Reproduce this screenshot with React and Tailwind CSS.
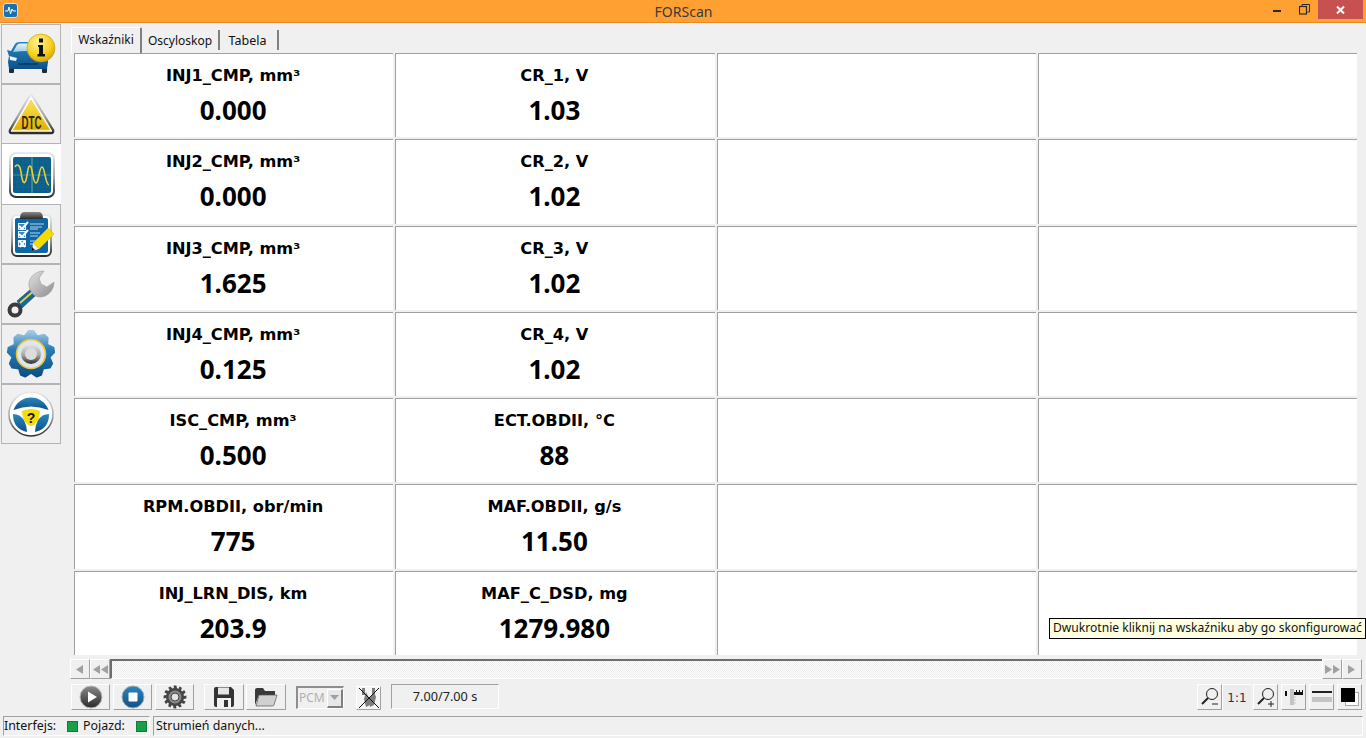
import React from "react";

const rows = [
  ["INJ1_CMP, mm³", "0.000", "CR_1, V", "1.03"],
  ["INJ2_CMP, mm³", "0.000", "CR_2, V", "1.02"],
  ["INJ3_CMP, mm³", "1.625", "CR_3, V", "1.02"],
  ["INJ4_CMP, mm³", "0.125", "CR_4, V", "1.02"],
  ["ISC_CMP, mm³", "0.500", "ECT.OBDII, °C", "88"],
  ["RPM.OBDII, obr/min", "775", "MAF.OBDII, g/s", "11.50"],
  ["INJ_LRN_DIS, km", "203.9", "MAF_C_DSD, mg", "1279.980"],
];

function gearPoints(cx, cy, ro, ri, n, wide = false) {
  const pts = [];
  const shape = wide
    ? [[-0.45, ro], [0.45, ro], [0.85, ri], [1.55, ri]]
    : [[-0.28, ro], [0.28, ro], [1, ri]];
  for (let i = 0; i < n; i++) {
    const a = (i / n) * Math.PI * 2 - Math.PI / 2;
    const s = Math.PI / n;
    shape.forEach(([k, r]) => {
      pts.push(`${(cx + r * Math.cos(a + k * s)).toFixed(1)},${(cy + r * Math.sin(a + k * s)).toFixed(1)}`);
    });
  }
  return pts.join(" ");
}

function Defs() {
  return (
    <svg width="0" height="0" className="absolute">
      <defs>
        <linearGradient id="blueV" x1="0" y1="0" x2="0" y2="1">
          <stop offset="0" stopColor="#2b86c0" />
          <stop offset="1" stopColor="#0b5288" />
        </linearGradient>
        <linearGradient id="gearB" x1="0" y1="0" x2="0" y2="1">
          <stop offset="0" stopColor="#a6cbe4" />
          <stop offset="0.4" stopColor="#2a7cb6" />
          <stop offset="1" stopColor="#0b4f86" />
        </linearGradient>
        <linearGradient id="glass" x1="0" y1="0" x2="0" y2="1">
          <stop offset="0" stopColor="#e6f3fa" />
          <stop offset="1" stopColor="#9ccbe6" />
        </linearGradient>
        <linearGradient id="yel" x1="0" y1="0" x2="0" y2="1">
          <stop offset="0" stopColor="#fbe25a" />
          <stop offset="1" stopColor="#e0b000" />
        </linearGradient>
        <linearGradient id="silver" x1="0" y1="0" x2="0" y2="1">
          <stop offset="0" stopColor="#e8e8e8" />
          <stop offset="0.55" stopColor="#a8a8a8" />
          <stop offset="1" stopColor="#2e2e2e" />
        </linearGradient>
        <linearGradient id="silver2" x1="0" y1="0" x2="1" y2="1">
          <stop offset="0" stopColor="#e2e2e2" />
          <stop offset="1" stopColor="#8d8d8d" />
        </linearGradient>
        <linearGradient id="dark" x1="0" y1="0" x2="0" y2="1">
          <stop offset="0" stopColor="#8a8a8a" />
          <stop offset="1" stopColor="#2a2a2a" />
        </linearGradient>
        <radialGradient id="ball" cx="0.4" cy="0.3" r="0.8">
          <stop offset="0" stopColor="#fff29a" />
          <stop offset="0.6" stopColor="#f6cf1d" />
          <stop offset="1" stopColor="#c99700" />
        </radialGradient>
      </defs>
    </svg>
  );
}

function CarIcon() {
  return (
    <svg width="60" height="60" viewBox="0 24 60 60">
      <rect x="9" y="66" width="5" height="7" rx="1" fill="#1f2a33" />
      <rect x="42" y="66" width="5" height="7" rx="1" fill="#1f2a33" />
      <path d="M7 50 L11 51 L15 44 Q16 42 20 42 L36 42 Q40 42 41 45 L44 51 L48 52 L47 56 L48 62 L47 69 L9 69 L8 62 L9 56 Z" fill="url(#blueV)" />
      <path d="M13 52 L17 45 Q18 43.500 20 43.500 L36 43.500 Q38 43.500 39 45 L42 52 Q28 50 13 52 Z" fill="url(#glass)" />
      <path d="M9.500 56 L17 58 L16 61 L10 60 Z M46.500 56 L39 58 L40 61 L46 60 Z" fill="#e6f3fa" />
      <rect x="18" y="63" width="20" height="2" fill="#0a3f6b" />
      <circle cx="41" cy="48" r="14" fill="url(#ball)" stroke="#c79a10" strokeWidth="0.6" />
      <path d="M39 38.500 h4 v4 h-4 z M38 45 h5 v9 h2 v2.500 h-7.500 v-2.500 h1.500 v-7 h-1 z" fill="#111" />
    </svg>
  );
}

function DtcIcon() {
  return (
    <svg width="60" height="60" viewBox="0 84 60 60">
      <path d="M31 95 Q32 95 33 97 L53 130 Q54 133 51 133 L12 133 Q9 133 10 130 L29 97 Q30 95 31 95 Z" fill="#fff" stroke="url(#silver)" strokeWidth="2.4" strokeLinejoin="round" />
      <path d="M31 100 L50 130 L13 130 Z" fill="url(#yel)" stroke="#f3d22f" strokeWidth="0.8" strokeLinejoin="round" />
      <text x="31.500" y="129" textAnchor="middle" fontFamily="'Liberation Sans', sans-serif" fontWeight="700" fontSize="19" textLength="20" lengthAdjust="spacingAndGlyphs" fill="#2a2a12">DTC</text>
    </svg>
  );
}

function ScopeIcon() {
  return (
    <svg width="60" height="60" viewBox="0 144 60 60">
      <rect x="10" y="153" width="44" height="44" rx="6" fill="#fff" stroke="url(#silver)" strokeWidth="2" />
      <rect x="13" y="157" width="38" height="36" rx="2" fill="#0c5f8c" />
      <g stroke="#2d8a9e" strokeWidth="0.4">
        {[18, 23, 28, 38, 43, 48].map((x) => <line key={x} x1={x} y1="157" x2={x} y2="193" strokeDasharray="1 2" />)}
        {[162, 167, 172, 182, 187].map((y) => <line key={y} x1="13" y1={y} x2="51" y2={y} strokeDasharray="1 2" />)}
      </g>
      <line x1="32" y1="157" x2="32" y2="193" stroke="#4e9c8a" strokeWidth="1.4" />
      <line x1="13" y1="175" x2="51" y2="175" stroke="#4e9c8a" strokeWidth="0.8" />
      <path d="M15 167 C17 163 20 165 21 172 C22 181 24 186 26 180 C28 172 28 163 31 167 C33 172 33 183 36 183 C39 183 39 167 42 167 C45 167 45 184 49 185" fill="none" stroke="#e8cf3a" strokeWidth="1.600" />
    </svg>
  );
}

function ListIcon() {
  return (
    <svg width="60" height="60" viewBox="0 204 60 60">
      <rect x="12" y="215" width="39" height="41" rx="5" fill="#fff" stroke="url(#silver)" strokeWidth="2" />
      <rect x="15" y="218" width="33" height="35" rx="2" fill="#0e66a4" />
      <path d="M20 219 Q20 212 24 212 L39 212 Q43 212 43 219 Z" fill="url(#dark)" />
      <g fill="none" stroke="#e8f2f8" strokeWidth="1">
        <rect x="18.500" y="223.500" width="7" height="6" fill="#3d86b8" />
        <rect x="18.500" y="231.500" width="7" height="6" fill="#3d86b8" />
        <rect x="18.500" y="240.500" width="7" height="6" fill="#3d86b8" />
        <path d="M30 224 H44 M30 227 H42 M30 229 H38 M30 233 H40 M30 236 H38 M30 241 H36 M30 244 H34" stroke="#b7d6ec" />
      </g>
      <path d="M19 226 L22 229 L28 222 M19 234 L22 237 L28 230" fill="none" stroke="#fff" strokeWidth="2" />
      <path d="M19.500 241 L25 247 M25 241 L19.500 247" stroke="#fff" strokeWidth="2" />
      <path d="M48 228 L54 234 L39 249 L33 243 Z" fill="#f5dc00" stroke="#c8a800" strokeWidth="0.5" />
      <path d="M33 243 L39 249 L32 251 Z" fill="#f6f0df" />
      <path d="M32 247 L35 250 L32 251 Z" fill="#111" />
    </svg>
  );
}

function WrenchIcon() {
  return (
    <svg width="60" height="60" viewBox="0 264 60 60">
      <path d="M17 301 L31 289 L36 295 L22 308 Z" fill="#0d6aa6" stroke="#3b3b3b" strokeWidth="0.7" />
      <path d="M20 303 L33 291.500" stroke="#f0d030" strokeWidth="1.800" />
      <path d="M44 271 C35 271 28 278 29 286 C30 292 34 297 40 297 C48 297 54 290 54 282 L47 287 L41 284 L39 278 Z" fill="url(#silver2)" stroke="#9c9c9c" strokeWidth="0.6" />
      <circle cx="15" cy="310" r="5.500" fill="#f0f0f0" stroke="#3b3b3b" strokeWidth="4" />
    </svg>
  );
}

function GearIcon() {
  return (
    <svg width="60" height="60" viewBox="0 324 60 60">
      <polygon points={gearPoints(31, 354, 23, 18.5, 9)} fill="url(#gearB)" strokeLinejoin="round" stroke="url(#gearB)" strokeWidth="2.400" />
      <circle cx="31" cy="354" r="14.500" fill="#dfe7ee" stroke="#eec430" strokeWidth="1.600" />
      <circle cx="31" cy="354" r="10" fill="url(#silver)" />
      <circle cx="31" cy="354" r="6" fill="#dcdcdc" />
    </svg>
  );
}

function WheelIcon() {
  return (
    <svg width="60" height="60" viewBox="0 384 60 60">
      <circle cx="31" cy="414" r="22" fill="#fff" stroke="url(#silver)" strokeWidth="1.600" />
      <path d="M13.500 410 A18.500 18.500 0 0 1 48.500 410 Q31 403 13.500 410 Z" fill="url(#blueV)" />
      <path d="M13 414 Q20 414 24 420 Q27 426 27 432 Q13 429 13 414 Z M49 414 Q42 414 38 420 Q35 426 35 432 Q49 429 49 414 Z" fill="url(#blueV)" />
      <path d="M22 411 Q31 407 40 411 Q40 420 34 425 Q31 427 28 425 Q22 420 22 411 Z" fill="#f5dc0f" />
      <text x="31" y="423" textAnchor="middle" fontFamily="'Liberation Sans', sans-serif" fontWeight="700" fontSize="14" fill="#111">?</text>
    </svg>
  );
}

const navItems = [CarIcon, DtcIcon, ScopeIcon, ListIcon, WrenchIcon, GearIcon, WheelIcon];

function Sidebar() {
  return (
    <div className="w-[70px] shrink-0 pl-[1px] pt-[1px] flex flex-col">
      {navItems.map((Icon, i) =>
        i === 2 ? (
          <div key={i} className="w-[60px] h-[60px] bg-white border-l border-[#b4b4b4] overflow-hidden">
            <div className="-ml-[2px]"><Icon /></div>
          </div>
        ) : (
          <div key={i} className="w-[60px] h-[60px] border border-[#b4b4b4] overflow-hidden">
            <div className="-ml-[2px] -mt-px">
              <Icon />
            </div>
          </div>
        )
      )}
    </div>
  );
}

function Tabs() {
  return (
    <div className="h-[30px] flex items-start text-[12px] text-[#111] pt-[4px] pl-[1px]">
      <div className="w-[71px] h-[26px] bg-[#f0f0f0] border-t border-l border-white border-r-2 border-r-[#808080] rounded-t-[2px] flex items-center justify-center pb-[1px]">Wskaźniki</div>
      <div className="w-[78px] h-[20px] mt-[3px] pt-[2px] border-r-2 border-r-[#808080] flex items-center justify-center">Oscyloskop</div>
      <div className="w-[59px] h-[20px] mt-[3px] pt-[2px] border-r-2 border-r-[#808080] flex items-center justify-center pr-[2px] text-[12.5px]">Tabela</div>
    </div>
  );
}

function Cell({ title, value }) {
  return (
    <div className="bg-white border-t border-l border-[#a0a0a0] flex flex-col items-center pr-[2px]">
      {title && (
        <>
          <div className="mt-[12px] h-[20px] leading-[20px] text-[16.200px] font-bold text-black font-['DejaVu_Sans',sans-serif] whitespace-nowrap">{title}</div>
          <div className="mt-[8px] h-[32px] leading-[32px] text-[26px] font-bold text-black whitespace-nowrap">{value}</div>
        </>
      )}
    </div>
  );
}

function Grid() {
  return (
    <div className="ml-[4px] w-[1283px] h-[602px] grid grid-cols-4 grid-rows-7 gap-[2px]">
      {rows.map((r) => (
        <React.Fragment key={r[0]}>
          <Cell title={r[0]} value={r[1]} />
          <Cell title={r[2]} value={r[3]} />
          <Cell />
          <Cell />
        </React.Fragment>
      ))}
    </div>
  );
}

function Arrow({ dir, double }) {
  const one = dir === "left" ? "M7 0 V9 L0 4.500 Z" : "M0 0 V9 L7 4.500 Z";
  return (
    <svg width={double ? 15 : 8} height="9" viewBox={double ? "0 0 15 9" : "0 0 8 9"}>
      <path d={one} fill="#a0a0a0" />
      {double && <path d={one} transform="translate(8 0)" fill="#a0a0a0" />}
    </svg>
  );
}

const scrollBtn = "w-[20px] h-[20px] border-t border-l border-white border-r border-b border-r-[#a0a0a0] border-b-[#a0a0a0] flex items-center justify-center";

function Scrollbar() {
  return (
    <div className="mt-[4px] w-[1292px] h-[20px] flex">
      <div className={scrollBtn}><Arrow dir="left" /></div>
      <div className={scrollBtn}><Arrow dir="left" double /></div>
      <div className="flex-1 border-t-2 border-l-2 border-[#6e6e6e] border-b border-b-white bg-[repeating-conic-gradient(#ececec_0_25%,#ffffff_0_50%)] bg-[length:2px_2px]" />
      <div className={scrollBtn}><Arrow dir="right" double /></div>
      <div className={scrollBtn}><Arrow dir="right" /></div>
    </div>
  );
}

const toolBtn = "h-[26px] border-t border-l border-white border-r border-b border-r-[#a0a0a0] border-b-[#a0a0a0] flex items-center justify-center shrink-0";

function Magnifier({ sign }) {
  return (
    <svg width="20" height="20" viewBox="0 0 20 20" fill="none" stroke="#222">
      <circle cx="12" cy="7" r="5.500" strokeWidth="1" />
      <path d="M8 11 L2 17" strokeWidth="2" />
      <path d="M12 17 H18" strokeWidth="1" />
      {sign === "+" && <path d="M15 14 V20" strokeWidth="1" />}
    </svg>
  );
}

function Toolbar() {
  return (
    <div className="mt-[5px] h-[27px] w-[1292px] flex items-start text-[12px] pl-[1px]">
      <div className={`${toolBtn} w-[39px]`}>
        <svg width="24" height="24" viewBox="0 0 24 24">
          <circle cx="12" cy="12" r="11" fill="url(#dark)" stroke="#bbb" />
          <path d="M9 6.500 L18 12 L9 17.500 Z" fill="#fff" />
        </svg>
      </div>
      <div className={`${toolBtn} w-[39px] ml-[3px]`}>
        <svg width="24" height="24" viewBox="0 0 24 24">
          <circle cx="12" cy="12" r="11" fill="url(#blueV)" stroke="#aaa" />
          <rect x="7.500" y="7.500" width="9" height="9" rx="1" fill="#fff" />
        </svg>
      </div>
      <div className={`${toolBtn} w-[39px] ml-[3px]`}>
        <svg width="24" height="24" viewBox="0 0 24 24">
          <polygon points={gearPoints(12, 12, 11.5, 9, 12, true)} fill="#454545" />
          <circle cx="12" cy="12" r="6.500" fill="#8a8a8a" />
          <circle cx="12" cy="12" r="4" fill="#e4e4e4" stroke="#444" />
        </svg>
      </div>
      <div className={`${toolBtn} w-[40px] ml-[10px]`}>
        <svg width="22" height="22" viewBox="0 0 22 22">
          <path d="M1 3 Q1 1 3 1 H18 L21 4 V19 Q21 21 19 21 H3 Q1 21 1 19 Z" fill="#333" />
          <rect x="5" y="1.500" width="11" height="7" fill="#e6e6e6" />
          <rect x="4" y="12" width="14" height="9" fill="#f2f2f2" />
          <rect x="11" y="14" width="4" height="7" fill="#333" />
        </svg>
      </div>
      <div className={`${toolBtn} w-[40px] ml-[2px]`}>
        <svg width="24" height="20" viewBox="0 0 24 20">
          <path d="M1 3 Q1 1 3 1 H9 L11 4 H21 V8 H5 L1 18 Z" fill="#3a3a3a" />
          <path d="M5 8 H23 L20 18 Q20 19 18 19 H2 Z" fill="#d0d0d0" stroke="#555" strokeWidth="0.700" />
        </svg>
      </div>
      <div className="w-[48px] h-[23px] ml-[10px] mt-[2px] flex items-center border-t-2 border-l-2 border-r border-b border-[#8e8e8e] border-r-white border-b-white text-[#b0b0b0] pl-[1px] shrink-0">
        <span className="flex-1">PCM</span>
        <div className="w-[16px] h-[19px] border-t border-l border-white border-r-2 border-b-2 border-r-[#808080] border-b-[#808080] bg-[#e8e8e8] flex items-center justify-center">
          <svg width="9" height="5" viewBox="0 0 9 5"><path d="M0 0 H9 L4.500 5 Z" fill="#a0a0a0" /></svg>
        </div>
      </div>
      <div className={`${toolBtn} w-[25px] ml-[12px] mt-[2px] !h-[24px] bg-[#f4f4f4]`}>
        <svg width="22" height="22" viewBox="0 0 22 22">
          <g fill="#7c7c7c">
            <rect x="4" y="1" width="3" height="7" />
            <rect x="14" y="1" width="3" height="7" />
            <path d="M8 5 L14 17 L8 20 L6 12 Z" />
            <path d="M16 5 L11 12 L12 20 L16 18 L18 10 Z" />
          </g>
          <path d="M1 1 L21 21 M21 1 L1 21" stroke="#111" strokeWidth="1" />
        </svg>
      </div>
      <div className="w-[108px] h-[25px] ml-[10px] border-t border-l border-[#a0a0a0] border-r border-b border-r-white border-b-white flex items-center justify-center text-[12.700px] text-[#222] shrink-0">7.00/7.00 s</div>
      <div className="flex-1" />
      <div className={`${toolBtn} w-[25px]`}><Magnifier sign="-" /></div>
      <div className="w-[29px] h-[26px] bg-[#ececec] border-t border-l border-white flex items-center justify-center text-[#3b2a3b] shrink-0 font-['DejaVu_Sans',sans-serif] text-[12px]">1:1</div>
      <div className={`${toolBtn} w-[25px] ml-[2px]`}><Magnifier sign="+" /></div>
      <div className={`${toolBtn} w-[25px] ml-[3px]`}>
        <svg width="20" height="20" viewBox="0 0 20 20">
          <rect x="1" y="4" width="2" height="5" fill="#111" />
          <rect x="6" y="2" width="4" height="16" fill="#c4c4c4" />
          <path d="M10 5 H12 V3 H13 V5 H15 V3 H16 V5 H18 V3 H19 V8 H10 Z" fill="#111" />
          <path d="M10 10 H12 M10 13 H12 M10 16 H12" stroke="#c4c4c4" />
        </svg>
      </div>
      <div className={`${toolBtn} w-[25px] ml-[3px]`}>
        <svg width="20" height="14" viewBox="0 0 20 14">
          <rect x="0" y="1" width="20" height="2" fill="#222" />
          <rect x="0" y="7" width="20" height="5" fill="#c4c4c4" />
        </svg>
      </div>
      <div className={`${toolBtn} w-[25px] ml-[3px]`}>
        <svg width="20" height="20" viewBox="0 0 20 20">
          <rect x="5.500" y="5.500" width="13" height="13" fill="#fff" stroke="#aaa" />
          <rect x="1" y="1" width="14" height="14" fill="#000" />
        </svg>
      </div>
    </div>
  );
}

function StatusBar() {
  return (
    <div className="h-[20px] mx-[3px] flex text-[12.400px] text-[#111]">
      <div className="w-[147px] border-t border-l border-[#a0a0a0] border-r border-b border-r-white border-b-white flex items-center">
        <span className="w-[53px] whitespace-nowrap">Interfejs:</span>
        <span className="ml-[10px] w-[11px] h-[11px] bg-[#16a04a] border border-[#127a3a]" />
        <span className="ml-[5px] w-[42px] whitespace-nowrap">Pojazd:</span>
        <span className="ml-[11px] w-[11px] h-[11px] bg-[#16a04a] border border-[#127a3a]" />
      </div>
      <div className="flex-1 ml-[3px] border-t border-l border-[#a0a0a0] border-r border-b border-r-white border-b-white flex items-center pl-[2px]">Strumień danych...</div>
    </div>
  );
}

export default function App() {
  return (
    <div className="relative w-[1366px] h-[738px] overflow-hidden bg-[#f0f0f0] flex flex-col font-['Noto_Sans',sans-serif]">
      <Defs />
      <div className="h-[23px] shrink-0 bg-[#ffa033] border-b border-[#e58a24] flex items-start relative">
        <div className="ml-[3px] mt-[3px] w-[15px] h-[15px] rounded-[3px] bg-[#1c6fae] border border-[#cfe3f2] flex items-center justify-center">
          <svg width="11" height="9" viewBox="0 0 11 9"><path d="M0 5 H3 L4 1 L5.500 8 L7 3 L8 5 H11" fill="none" stroke="#fff" strokeWidth="1" /></svg>
        </div>
        <div className="flex-1 text-center text-[14px] leading-[23px] text-[#3a3a3a] pl-[76px]">FORScan</div>
        <div className="flex items-start">
          <svg width="10" height="3" viewBox="0 0 10 3" className="mt-[10px] mr-[16px]"><rect width="8" height="2" fill="#2a2a2a" /></svg>
          <svg width="11" height="11" viewBox="0 0 11 11" className="mt-[4px] mr-[8px]" fill="none" stroke="#2a2a2a">
            <path d="M3 2.500 V0.500 H10.500 V8 H8.500" />
            <rect x="0.500" y="2.500" width="7" height="7.500" strokeWidth="1.200" />
          </svg>
          <div className="w-[45px] h-[19px] bg-[#c75050] flex items-center justify-center">
            <svg width="9" height="8" viewBox="0 0 9 8"><path d="M1 0.500 L8 7.500 M8 0.500 L1 7.500" stroke="#fff" strokeWidth="2" /></svg>
          </div>
          <div className="w-[3px]" />
        </div>
      </div>
      <div className="h-[693px] shrink-0 flex">
        <Sidebar />
        <div className="flex-1 flex flex-col">
          <Tabs />
          <Grid />
          <Scrollbar />
          <Toolbar />
        </div>
      </div>
      <StatusBar />
      <div className="absolute left-[1049px] top-[618px] w-[317px] h-[21px] bg-[#ffffe1] border border-black text-[12.100px] text-[#111] flex items-center pl-[3px] whitespace-nowrap">Dwukrotnie kliknij na wskaźniku aby go skonfigurować</div>
    </div>
  );
}
